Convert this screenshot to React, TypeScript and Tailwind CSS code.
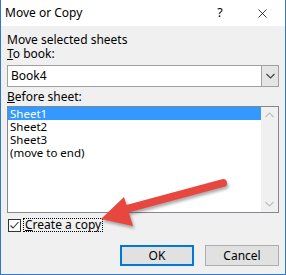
import { X } from "lucide-react";

const font = { fontFamily: '"Noto Sans", "Open Sans", sans-serif' };

const Chevron = ({ up = false, color = "#606060" }: { up?: boolean; color?: string }) => (
    <svg width="9" height="6" viewBox="0 0 9 6">
        <path d={up ? "M0.5 5 L4.5 1 L8.5 5" : "M0.5 1 L4.5 5 L8.5 1"} fill="none" stroke={color} strokeWidth="1.2" />
    </svg>
);

export default function App() {
    const sheets = ["Sheet1", "Sheet2", "Sheet3", "(move to end)"];

    return (
        <div className="relative w-[286px] h-[275px] bg-[#f0f0f0] border-x border-b border-[#2f79c7] text-[12px] text-black overflow-hidden" style={font}>
            {/* title bar */}
            <div className="flex items-center h-[26px] bg-white pl-[4px]">
                <span className="flex-1 text-[12px]">Move or Copy</span>
                <span className="w-[20px] text-center mr-[25px] text-[12.5px]">?</span>
                <X size={15} strokeWidth={1.2} className="mr-[15px]" />
            </div>

            <div className="px-[6px]">
                <div className="mt-[7px] leading-[14px]">Move selected sheets</div>
                <div className="leading-[14px]"><span className="underline">T</span>o book:</div>

                {/* combobox */}
                <div className="mt-[4px] flex h-[22px] bg-white border border-[#a0a0a0]">
                    <div className="flex-1 flex items-center pl-[3px]">Book4</div>
                    <div className="w-[17px] flex items-center justify-center bg-[#e5e5e5] border-l border-[#a0a0a0]">
                        <Chevron color="#404040" />
                    </div>
                </div>

                <div className="mt-[3px] leading-[14px]"><span className="underline">B</span>efore sheet:</div>

                {/* listbox */}
                <div className="mt-[2px] flex h-[107px] bg-white border border-[#828790]">
                    <div className="flex-1">
                        {sheets.map((s, i) => (
                            <div
                                key={s}
                                className={`h-[13px] leading-[13px] pl-[2px] text-[11.5px] ${i === 0 ? "bg-[#3399ff] text-white" : ""}`}
                            >
                                {s}
                            </div>
                        ))}
                    </div>
                    <div className="w-[17px] bg-[#f0f0f0] flex flex-col justify-between items-center py-[5px]">
                        <Chevron up color="#c0c0c0" />
                        <Chevron color="#c0c0c0" />
                    </div>
                </div>

                {/* checkbox */}
                <div className="mt-[5px] flex items-center h-[14px]">
                    <div className="w-[13px] h-[13px] border border-[#333] bg-white flex items-center justify-center ml-[1px]">
                        <svg width="11" height="11" viewBox="0 0 11 11">
                            <path d="M1.5 5.5 L4 8 L9.5 2" fill="none" stroke="#333" strokeWidth="1.1" />
                        </svg>
                    </div>
                    <span className="ml-[2px] px-[1px] leading-[12px] border border-dotted border-black">
                        <span className="underline">C</span>reate a copy
                    </span>
                </div>

                {/* buttons */}
                <div className="mt-[13px] flex justify-end gap-[11px]">
                    <button className="w-[74px] h-[21px] bg-[#e1e1e1] border-2 border-[#0078d7] leading-none">OK</button>
                    <button className="w-[74px] h-[21px] bg-[#e1e1e1] border border-[#adadad] leading-none">Cancel</button>
                </div>
            </div>

            {/* annotation arrow */}
            <svg className="absolute left-0 top-0 pointer-events-none" width="286" height="275">
                <defs>
                    <filter id="sh" x="-20%" y="-20%" width="140%" height="140%">
                        <feGaussianBlur stdDeviation="1.5" />
                    </filter>
                </defs>
                <g transform="translate(1.5 2.5)" filter="url(#sh)" opacity="0.45">
                    <line x1="222" y1="183" x2="118" y2="211" stroke="#444" strokeWidth="8" strokeLinecap="round" />
                    <polygon points="100,219 123,197 132,226" fill="#444" />
                </g>
                <line x1="222" y1="183" x2="118" y2="211" stroke="#e8473f" strokeWidth="8" strokeLinecap="round" />
                <polygon points="100,219 123,197 132,226" fill="#e8473f" />
            </svg>
        </div>
    );
}
